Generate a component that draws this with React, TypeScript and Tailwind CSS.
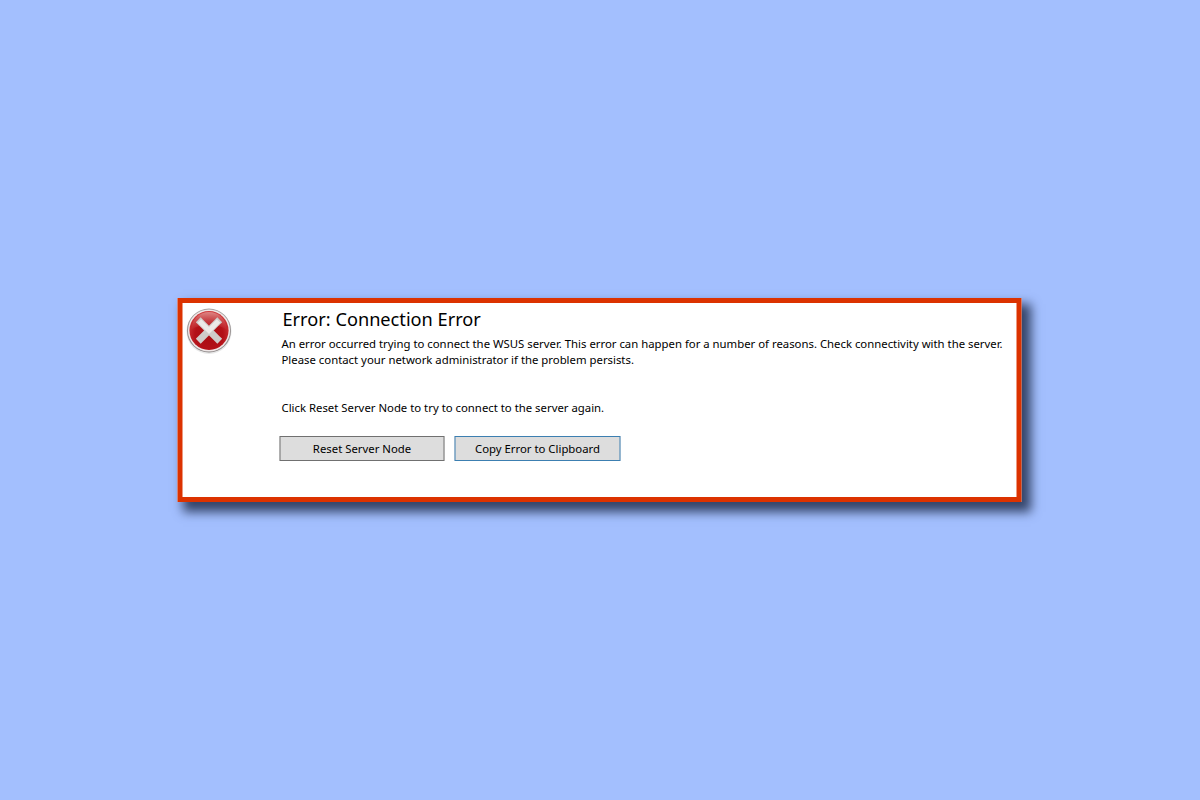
const font = { fontFamily: '"Noto Sans", "Open Sans", sans-serif' };

// red round error badge with the white cross
function ErrorIcon() {
  return (
    <svg width="47" height="47" viewBox="0 0 48 48" className="shrink-0">
      <defs>
        <radialGradient id="disc" cx="50%" cy="62%" r="60%">
          <stop offset="0%" stopColor="#a80c12" />
          <stop offset="60%" stopColor="#b31118" />
          <stop offset="100%" stopColor="#d03a3c" />
        </radialGradient>
        <linearGradient id="shine" x1="0" y1="0" x2="0" y2="1">
          <stop offset="0%" stopColor="#e09a98" stopOpacity="0.8" />
          <stop offset="100%" stopColor="#c8343a" stopOpacity="0.25" />
        </linearGradient>
        <linearGradient id="ring" x1="0" y1="0" x2="0" y2="1">
          <stop offset="0%" stopColor="#a9a3a3" />
          <stop offset="100%" stopColor="#8a8585" />
        </linearGradient>
      </defs>
      <circle cx="24" cy="25" r="23" fill="#d8d8d8" opacity="0.6" />
      <circle cx="24" cy="24" r="22.5" fill="url(#ring)" />
      <circle cx="24" cy="24" r="21.5" fill="#f0e8e8" />
      <circle cx="24" cy="24" r="20" fill="url(#disc)" />
      <path d="M6 23 A18 18 0 0 1 42 23 C33 17 15 17 6 23 Z" fill="url(#shine)" />
      <path d="M15.5 15.5 L32.5 32.5 M32.5 15.5 L15.5 32.5" stroke="#cfcbc9" strokeWidth="7" strokeLinecap="square" />
      <path d="M16 16 L24 24 M32 16 L24 24" stroke="#ece9e8" strokeWidth="5" strokeLinecap="square" />
    </svg>
  );
}

export default function App() {
  return (
    <div className="w-full h-screen bg-[#a3bffe] flex items-center justify-center" style={font}>
      <div className="w-[844px] h-[204px] -translate-x-[0.5px] bg-white border-[5px] border-[#dc3200] shadow-[7px_8px_10px_2px_#35456a] flex pl-[3px] pt-[4px]">
        <ErrorIcon />
        <div className="ml-[49px] flex-1 text-black">
          <h1 className="text-[18.2px] leading-[26px] ml-[1px] -mt-[1px]">Error: Connection Error</h1>
          <p className="text-[11.35px] leading-[16px] mt-[4px] whitespace-nowrap">
            An error occurred trying to connect the WSUS server. This error can happen for a number of reasons. Check connectivity with the server.
            <br />
            Please contact your network administrator if the problem persists.
          </p>
          <p className="text-[11.35px] leading-[16px] mt-[32px]">Click Reset Server Node to try to connect to the server again.</p>
          <div className="flex gap-[10px] mt-[20px] -ml-[2px]">
            <button className="w-[165px] h-[25px] bg-[#dddddd] border border-[#707070] text-[11.35px]">Reset Server Node</button>
            <button className="w-[166px] h-[25px] bg-[#dddddd] border border-[#3c7fb1] text-[11.35px]">Copy Error to Clipboard</button>
          </div>
        </div>
      </div>
    </div>
  );
}
